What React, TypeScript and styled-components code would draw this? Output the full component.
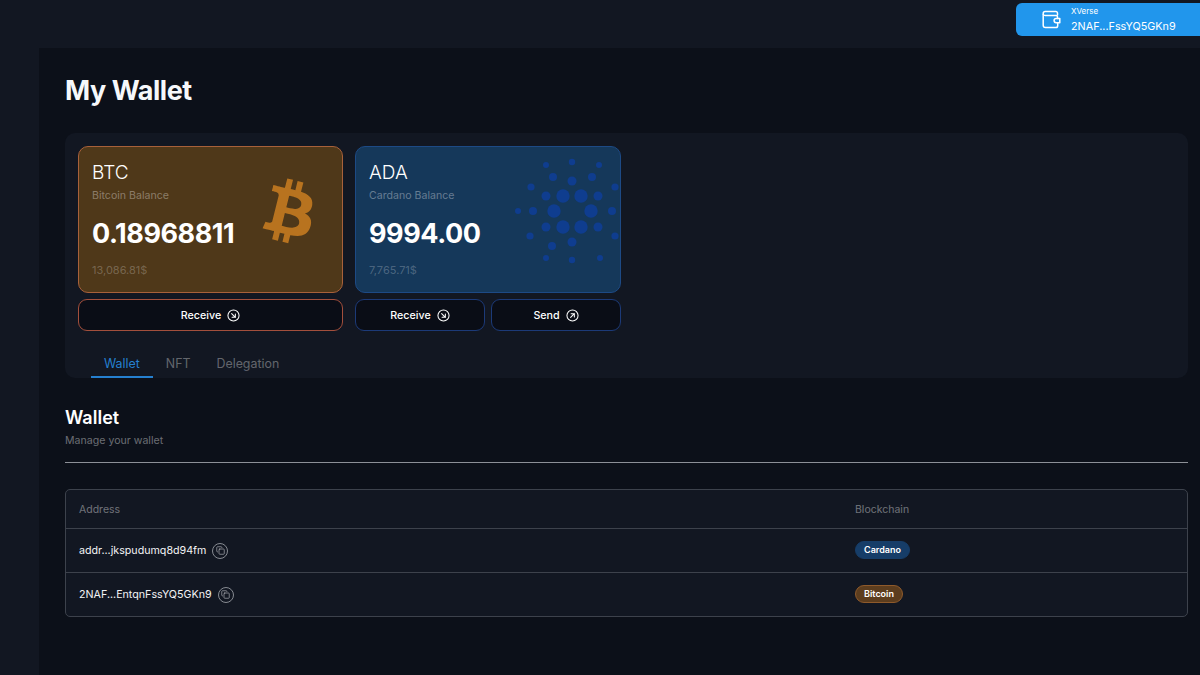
import React from 'react'
import styled, { createGlobalStyle } from 'styled-components'
import { FaBtc } from 'react-icons/fa'
import { Copy } from 'lucide-react'

const GlobalStyle = createGlobalStyle`
	html, body {
		margin: 0;
		padding: 0;
		height: 100%;
		background: #121722;
		font-family: Inter, 'Noto Sans', sans-serif;
		color: #fff;
		overflow: hidden;
	}
	* {
		box-sizing: border-box;
	}
`

const palette = {
	btc: { card: '#4f3819', border: '#a8613a', button: '#a34f3c', badge: '#5c3d1e', badgeBorder: '#8f5a2b' },
	ada: { card: '#15385a', border: '#1d4a85', button: '#1c3a78', badge: '#163d68', badgeBorder: '#163d68' }
}

type Coin = keyof typeof palette

// big dots first, then the rings going outwards
const cardanoDots: [number, number, number][] = [
	[48, 46, 6.7], [66, 46, 6.7], [39, 61, 6.7], [76, 61, 6.7], [48, 77, 6.7], [66, 77, 6.7],
	[31, 46, 4.5], [83, 46, 4.5], [18, 61, 4], [97, 61, 4], [31, 77, 4.5], [83, 77, 4.5],
	[57, 31, 4.5], [57, 92, 4.5], [38, 27, 4], [77, 27, 4], [37, 96, 4],
	[31, 15, 3], [57, 12, 3.2], [84, 15, 3], [16, 37, 3.6], [100, 37, 3.6],
	[3, 61, 3], [15, 86, 3.6], [100, 86, 3.6], [31, 108, 3], [57, 110, 3.2], [85, 108, 3]
]

const CardanoMark = () => (
	<CardanoSvg viewBox="0 0 105 120">
		{cardanoDots.map(([cx, cy, r]) => (
			<circle key={`${cx}-${cy}`} cx={cx} cy={cy} r={r} fill="#0f3d8f" />
		))}
	</CardanoSvg>
)

const ArrowCircle: React.FC<{ up?: boolean }> = ({ up }) => (
	<svg width="13" height="13" viewBox="0 0 14 14" fill="none" stroke="#fff" strokeWidth="1.1" strokeLinecap="round" strokeLinejoin="round">
		<circle cx="7" cy="7" r="6" />
		{up ? (
			<path d="M5 9 9 5M5.5 5H9v3.5" />
		) : (
			<path d="M5 5 9 9M9 5.5V9H5.5" />
		)}
	</svg>
)

const WalletIcon = () => (
	<svg width="19" height="19" viewBox="0 0 19 19" fill="none" stroke="#fff" strokeWidth="1.5" strokeLinecap="round" strokeLinejoin="round">
		<path d="M15.5 5V3.2c0-.9-.7-1.7-1.6-1.7H3.2C2.2 1.5 1.2 2.4 1.2 3.6v11.6c0 1.3 1 2.3 2.3 2.3h10.4c1 0 1.8-.8 1.8-1.8v-2.2" />
		<path d="M1.4 4.6c.4.5 1 .8 1.7.8h11c.8 0 1.4.6 1.4 1.3v1.8" />
		<path d="M17.8 8.5h-3.6a2.1 2.1 0 0 0 0 4.2h3.6z" />
	</svg>
)

const Receive: React.FC<{ coin: Coin }> = ({ coin }) => (
	<ActionButton $coin={coin}>
		Receive <ArrowCircle />
	</ActionButton>
)

const App: React.FC = () => {
	return (
		<Shell>
			<GlobalStyle />
			<TopBar>
				<ConnectedWallet>
					<WalletIcon />
					<WalletText>
						<WalletName>XVerse</WalletName>
						<WalletAddress>2NAF...FssYQ5GKn9</WalletAddress>
					</WalletText>
				</ConnectedWallet>
			</TopBar>
			<Main>
				<PageTitle>My Wallet</PageTitle>
				<Panel>
					<Balances>
						<Balance>
							<Card $coin="btc">
								<Ticker>BTC</Ticker>
								<CardLabel>Bitcoin Balance</CardLabel>
								<Amount>0.18968811</Amount>
								<Fiat>13,086.81$</Fiat>
								<BitcoinMark />
							</Card>
							<Actions>
								<Receive coin="btc" />
							</Actions>
						</Balance>
						<Balance>
							<Card $coin="ada">
								<Ticker>ADA</Ticker>
								<CardLabel>Cardano Balance</CardLabel>
								<Amount>9994.00</Amount>
								<Fiat>7,765.71$</Fiat>
								<CardanoMark />
							</Card>
							<Actions>
								<Receive coin="ada" />
								<ActionButton $coin="ada">
									Send <ArrowCircle up />
								</ActionButton>
							</Actions>
						</Balance>
					</Balances>
					<Tabs>
						<Tab $active>Wallet</Tab>
						<Tab>NFT</Tab>
						<Tab>Delegation</Tab>
					</Tabs>
				</Panel>
				<SectionTitle>Wallet</SectionTitle>
				<SectionHint>Manage your wallet</SectionHint>
				<Divider />
				<TableFrame>
					<HeadRow>
						<HeadCell>Address</HeadCell>
						<HeadCell>Blockchain</HeadCell>
					</HeadRow>
					<Row>
						<Address>
							addr...jkspudumq8d94fm
							<CopyButton><Copy size={9} strokeWidth={1.6} /></CopyButton>
						</Address>
						<BadgeCell><Badge $coin="ada">Cardano</Badge></BadgeCell>
					</Row>
					<Row>
						<Address>
							2NAF...EntqnFssYQ5GKn9
							<CopyButton><Copy size={9} strokeWidth={1.6} /></CopyButton>
						</Address>
						<BadgeCell><Badge $coin="btc">Bitcoin</Badge></BadgeCell>
					</Row>
				</TableFrame>
			</Main>
		</Shell>
	)
}

export default App

const Shell = styled.div`
	width: 1200px;
	height: 675px;
	display: flex;
	flex-direction: column;
	background: #121722;
`

const TopBar = styled.header`
	height: 48px;
	flex-shrink: 0;
	display: flex;
	justify-content: flex-end;
	align-items: flex-start;
	padding-top: 3px;
`

const ConnectedWallet = styled.button`
	width: 184px;
	height: 33px;
	display: flex;
	align-items: center;
	gap: 10px;
	padding: 0 0 0 26px;
	border: none;
	border-radius: 6px 0 0 6px;
	background: #2196ec;
	color: #fff;
	font-family: inherit;
	text-align: left;
`

const WalletText = styled.div`
	display: flex;
	flex-direction: column;
	gap: 4px;
`

const WalletName = styled.span`
	font-size: 8px;
	line-height: 10px;
`

const WalletAddress = styled.span`
	font-size: 10.8px;
	line-height: 14px;
`

const Main = styled.main`
	flex: 1;
	margin-left: 39px;
	padding: 23px 12px 0 26px;
	background: #0c1019;
	display: flex;
	flex-direction: column;
`

const PageTitle = styled.h1`
	margin: 0;
	font-size: 27px;
	line-height: 40px;
	font-weight: 700;
	letter-spacing: -0.45px;
	color: #f6f8fb;
`

const Panel = styled.section`
	margin-top: 22px;
	height: 245px;
	padding: 13px 13px 0;
	border-radius: 10px;
	background: #121722;
	display: flex;
	flex-direction: column;
`

const Balances = styled.div`
	display: grid;
	grid-template-columns: 265px 266px;
	gap: 12px;
`

const Balance = styled.div`
	display: flex;
	flex-direction: column;
	gap: 6px;
`

const Card = styled.div<{ $coin: Coin }>`
	position: relative;
	height: 147px;
	padding: 14px 13px;
	border-radius: 10px;
	border: 1px solid ${({ $coin }) => palette[$coin].border};
	background: ${({ $coin }) => palette[$coin].card};
	overflow: hidden;
`

const Ticker = styled.div`
	font-size: 19px;
	line-height: 23px;
	font-weight: 300;
`

const CardLabel = styled.div`
	margin-top: 5px;
	font-size: 10.6px;
	line-height: 14px;
	color: #ffffff59;
`

const Amount = styled.div`
	margin-top: 13px;
	font-size: 27px;
	line-height: 36px;
	font-weight: 700;
	letter-spacing: -0.45px;
`

const Fiat = styled.div`
	margin-top: 11px;
	font-size: 11px;
	line-height: 14px;
	color: #ffffff3d;
`

const BitcoinMark = styled(FaBtc)`
	position: absolute;
	left: 188px;
	top: 32px;
	width: 47px;
	height: 65px;
	color: #b8731f;
	transform: rotate(14deg);
`

const CardanoSvg = styled.svg`
	position: absolute;
	left: 159px;
	top: 3px;
	width: 105px;
	height: 120px;
`

const Actions = styled.div`
	display: flex;
	gap: 6px;
`

const ActionButton = styled.button<{ $coin: Coin }>`
	flex: 1;
	height: 32px;
	display: flex;
	align-items: center;
	justify-content: center;
	gap: 6px;
	border-radius: 9px;
	border: 1px solid ${({ $coin }) => palette[$coin].button};
	background: #0a0d16;
	color: #fff;
	font-family: inherit;
	font-size: 10.7px;
	font-weight: 500;
`

const Tabs = styled.nav`
	margin-top: auto;
	padding-left: 13px;
	display: flex;
`

const Tab = styled.div<{ $active?: boolean }>`
	height: 34px;
	padding: 6px 13px 0;
	display: flex;
	align-items: center;
	font-size: 12.4px;
	color: ${({ $active }) => ($active ? '#2580d0' : '#ffffff59')};
	border-bottom: 2px solid ${({ $active }) => ($active ? '#2580d0' : 'transparent')};
`

const SectionTitle = styled.h2`
	margin: 28px 0 0;
	font-size: 18px;
	line-height: 24px;
	font-weight: 600;
`

const SectionHint = styled.div`
	margin-top: 4px;
	font-size: 10.6px;
	line-height: 14px;
	color: #ffffff66;
`

const Divider = styled.hr`
	width: 100%;
	margin: 14px 0 0;
	border: none;
	border-top: 1px solid #8d9097;
`

const TableFrame = styled.div`
	margin-top: 26px;
	height: 128px;
	border: 1px solid #3d424c;
	border-radius: 5px;
	background: #121722;
	overflow: hidden;
`

const HeadRow = styled.div`
	height: 38px;
	padding: 0 13px;
	display: grid;
	grid-template-columns: 776px 1fr;
	align-items: center;
`

const HeadCell = styled.div`
	font-size: 10.5px;
	color: #ffffff66;
`

const Row = styled(HeadRow)`
	height: 44px;
	border-top: 1px solid #3d424c;
`

const Address = styled.div`
	display: flex;
	align-items: center;
	gap: 6px;
	font-size: 10.7px;
	color: #f2f3f5;
`

const CopyButton = styled.span`
	width: 16px;
	height: 16px;
	display: inline-flex;
	align-items: center;
	justify-content: center;
	border: 1px solid #878b92;
	border-radius: 50%;
	color: #c3c5c9;
`

const BadgeCell = styled.div`
	display: flex;
	padding-bottom: 2px;
`

const Badge = styled.span<{ $coin: Coin }>`
	padding: 0 8px;
	height: 18px;
	line-height: 16px;
	border-radius: 9px;
	border: 1px solid ${({ $coin }) => palette[$coin].badgeBorder};
	background: ${({ $coin }) => palette[$coin].badge};
	font-size: 9px;
	font-weight: 600;
`
